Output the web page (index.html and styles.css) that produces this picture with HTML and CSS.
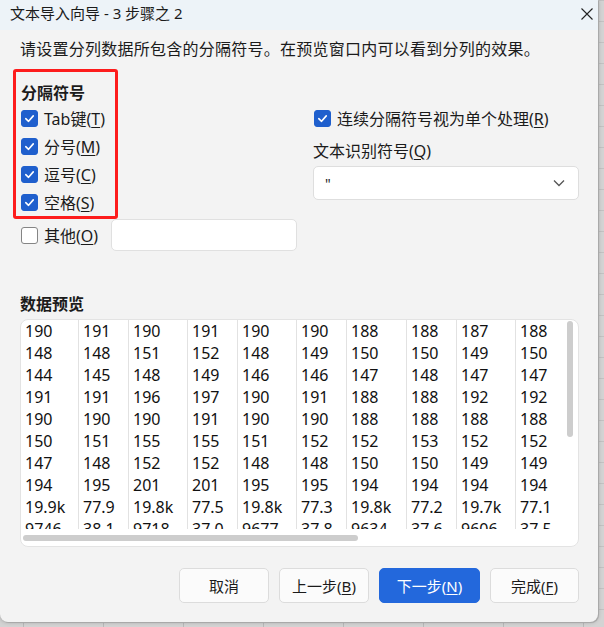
FILE: index.html
```html
<!DOCTYPE html>
<html lang="zh-CN">
<head>
    <meta charset="UTF-8">
    <title>文本导入向导 - 3 步骤之 2</title>
    <link rel="stylesheet" href="styles.css">
</head>
<body>
    <div class="dialog">
        <div class="titlebar">
            <span class="title">文本导入向导 - 3 步骤之 2</span>
            <svg class="close" viewBox="0 0 14 14"><path d="M1.5 1.5 L12.5 12.5 M12.5 1.5 L1.5 12.5"/></svg>
        </div>

        <div class="content">
            <p class="intro">请设置分列数据所包含的分隔符号。在预览窗口内可以看到分列的效果。</p>

            <div class="options">
                <div class="left">
                    <div class="sep-box">
                        <h2 class="group-title">分隔符号</h2>
                        <label class="check"><span class="box on"><svg viewBox="0 0 16 16"><path d="M4 8.2 L7 11 L12 5.2"/></svg></span><span>Tab键(<u>T</u>)</span></label>
                        <label class="check"><span class="box on"><svg viewBox="0 0 16 16"><path d="M4 8.2 L7 11 L12 5.2"/></svg></span><span>分号(<u>M</u>)</span></label>
                        <label class="check"><span class="box on"><svg viewBox="0 0 16 16"><path d="M4 8.2 L7 11 L12 5.2"/></svg></span><span>逗号(<u>C</u>)</span></label>
                        <label class="check"><span class="box on"><svg viewBox="0 0 16 16"><path d="M4 8.2 L7 11 L12 5.2"/></svg></span><span>空格(<u>S</u>)</span></label>
                    </div>
                    <div class="other-row">
                        <label class="check"><span class="box"></span><span>其他(<u>O</u>)</span></label>
                        <div class="text-input"></div>
                    </div>
                </div>

                <div class="right">
                    <label class="check"><span class="box on"><svg viewBox="0 0 16 16"><path d="M4 8.2 L7 11 L12 5.2"/></svg></span><span>连续分隔符号视为单个处理(<u>R</u>)</span></label>
                    <div class="field-label">文本识别符号(<u>Q</u>)</div>
                    <div class="select">
                        <span>"</span>
                        <svg class="chevron" viewBox="0 0 12 8"><path d="M1 1.5 L6 6.5 L11 1.5"/></svg>
                    </div>
                </div>
            </div>

            <h2 class="group-title preview-title">数据预览</h2>
            <div class="preview">
                <div class="grid">
                    <div class="col wide first">190<br>148<br>144<br>191<br>190<br>150<br>147<br>194<br>19.9k<br>9746</div>
                    <div class="col">191<br>148<br>145<br>191<br>190<br>151<br>148<br>195<br>77.9<br>38.1</div>
                    <div class="col wide">190<br>151<br>148<br>196<br>190<br>155<br>152<br>201<br>19.8k<br>9718</div>
                    <div class="col">191<br>152<br>149<br>197<br>191<br>155<br>152<br>201<br>77.5<br>37.0</div>
                    <div class="col wide">190<br>148<br>146<br>190<br>190<br>151<br>148<br>195<br>19.8k<br>9677</div>
                    <div class="col">190<br>149<br>146<br>191<br>190<br>152<br>148<br>195<br>77.3<br>37.8</div>
                    <div class="col wide plus">188<br>150<br>147<br>188<br>188<br>152<br>150<br>194<br>19.8k<br>9634</div>
                    <div class="col">188<br>150<br>148<br>188<br>188<br>153<br>150<br>194<br>77.2<br>37.6</div>
                    <div class="col wide">187<br>149<br>147<br>192<br>188<br>152<br>149<br>194<br>19.7k<br>9606</div>
                    <div class="col last">188<br>150<br>147<br>192<br>188<br>152<br>149<br>194<br>77.1<br>37.5</div>
                </div>
                <div class="vthumb"></div>
                <div class="hthumb"></div>
            </div>

            <div class="buttons">
                <button class="btn">取消</button>
                <button class="btn">上一步(<u>B</u>)</button>
                <button class="btn primary">下一步(<u>N</u>)</button>
                <button class="btn">完成(<u>F</u>)</button>
            </div>
        </div>
    </div>
</body>
</html>
```

FILE: styles.css
```css
* {
    margin: 0;
    padding: 0;
    box-sizing: border-box;
}

body {
    width: 604px;
    height: 627px;
    overflow: hidden;
    font-family: "Noto Sans", "Noto Sans CJK SC", sans-serif;
    color: #1b1b1b;
    background-color: #d3d3d3;
    background-image:
        linear-gradient(90deg, transparent 0, transparent 23px, #b9b9b9 23px, #b9b9b9 24px, transparent 24px),
        linear-gradient(0deg, transparent 0, transparent 20px, #c2c2c2 20px, #c2c2c2 21px, transparent 21px);
    background-size: 80px 100%, 100% 21px;
}

u {
    text-decoration: underline;
    text-underline-offset: 2px;
    text-decoration-thickness: 1px;
}

.dialog {
    width: 598px;
    height: 622px;
    background: #f3f3f3;
    border-radius: 0 0 8px 8px;
    box-shadow: 1px 1px 0 #a9a9a9, 0 0 4px rgba(0, 0, 0, 0.25);
    overflow: hidden;
}

/* title bar */
.titlebar {
    height: 30px;
    background: #edf3f8;
    display: flex;
    align-items: center;
    justify-content: space-between;
    padding: 0 4px 5px 10px;
}

.title {
    font-size: 15px;
    line-height: 20px;
}

.close {
    width: 14px;
    height: 14px;
    margin-top: 3px;
}

.close path {
    stroke: #222;
    stroke-width: 1.1;
    fill: none;
}

.content {
    padding: 0 19px 0 20px;
}

.intro {
    margin-top: 8px;
    font-size: 16px;
    line-height: 22px;
    letter-spacing: 0.25px;
}

/* options */
.options {
    display: grid;
    grid-template-columns: 293px 1fr;
    margin-top: 9px;
}

.sep-box {
    width: 105px;
    margin-left: -7px;
    padding: 10px 0 0 5px;
    border: 3px solid #fd1c1c;
    border-radius: 3px;
}

.group-title {
    font-size: 16px;
    font-weight: 700;
    line-height: 22px;
}

.check {
    display: flex;
    align-items: center;
    gap: 6px;
    height: 28px;
    font-size: 16px;
    white-space: nowrap;
}

.box {
    width: 17px;
    height: 17px;
    flex: none;
    border-radius: 3px;
    border: 1px solid #858585;
    background: #fff;
    display: flex;
    align-items: center;
    justify-content: center;
}

.box.on {
    background: #1f5fcd;
    border-color: #1f5fcd;
}

.box svg {
    width: 15px;
    height: 15px;
}

.box svg path {
    fill: none;
    stroke: #fff;
    stroke-width: 1.7;
    stroke-linecap: round;
    stroke-linejoin: round;
}

.other-row {
    display: flex;
    align-items: center;
    gap: 13px;
    height: 32px;
    padding-left: 1px;
}

.text-input {
    width: 186px;
    height: 32px;
    background: #fff;
    border: 1px solid #e0e0e0;
    border-radius: 5px;
}

.right {
    padding-top: 35px;
}

.right .check {
    padding-left: 1px;
}

.field-label {
    margin-top: 8px;
    font-size: 16px;
    line-height: 22px;
}

.select {
    margin-top: 4px;
    width: 266px;
    height: 34px;
    background: #fff;
    border: 1px solid #dedede;
    border-radius: 5px;
    display: flex;
    align-items: center;
    justify-content: space-between;
    padding: 0 13px 0 11px;
    font-size: 14px;
}

.chevron {
    width: 12px;
    height: 8px;
}

.chevron path {
    fill: none;
    stroke: #555;
    stroke-width: 1.3;
}

/* preview */
.preview-title {
    margin-top: 42px;
}

.preview {
    position: relative;
    margin-top: 4px;
    height: 228px;
    background: #fff;
    border: 1px solid #e3e3e3;
    border-radius: 8px;
    overflow: hidden;
}

.grid {
    display: flex;
    height: 209px;
    overflow: hidden;
}

.col {
    flex: none;
    width: 50px;
    padding-left: 4px;
    border-right: 1px solid #e2e2e2;
    font-size: 16px;
    line-height: 22px;
    color: #111;
}

.col.wide {
    width: 59px;
}

.col.plus {
    width: 60px;
}

.col.first {
    width: 58px;
}

.col.last {
    border-right: none;
}

.vthumb {
    position: absolute;
    top: 1px;
    right: 5px;
    width: 6px;
    height: 116px;
    border-radius: 3px;
    background: #cdcdcd;
}

.hthumb {
    position: absolute;
    left: 2px;
    top: 215px;
    width: 335px;
    height: 6px;
    border-radius: 3px;
    background: #cdcdcd;
}

/* buttons */
.buttons {
    display: flex;
    justify-content: flex-end;
    gap: 10px;
    margin-top: 21px;
}

.btn {
    width: 90px;
    height: 35px;
    font-family: inherit;
    font-size: 15px;
    color: #1b1b1b;
    background: #fbfbfb;
    border: 1px solid #dcdcdc;
    border-radius: 5px;
}

.btn.primary {
    width: 101px;
    background: #2368dc;
    border-color: #2368dc;
    color: #fff;
}

.btn:last-child {
    width: 89px;
}
```
